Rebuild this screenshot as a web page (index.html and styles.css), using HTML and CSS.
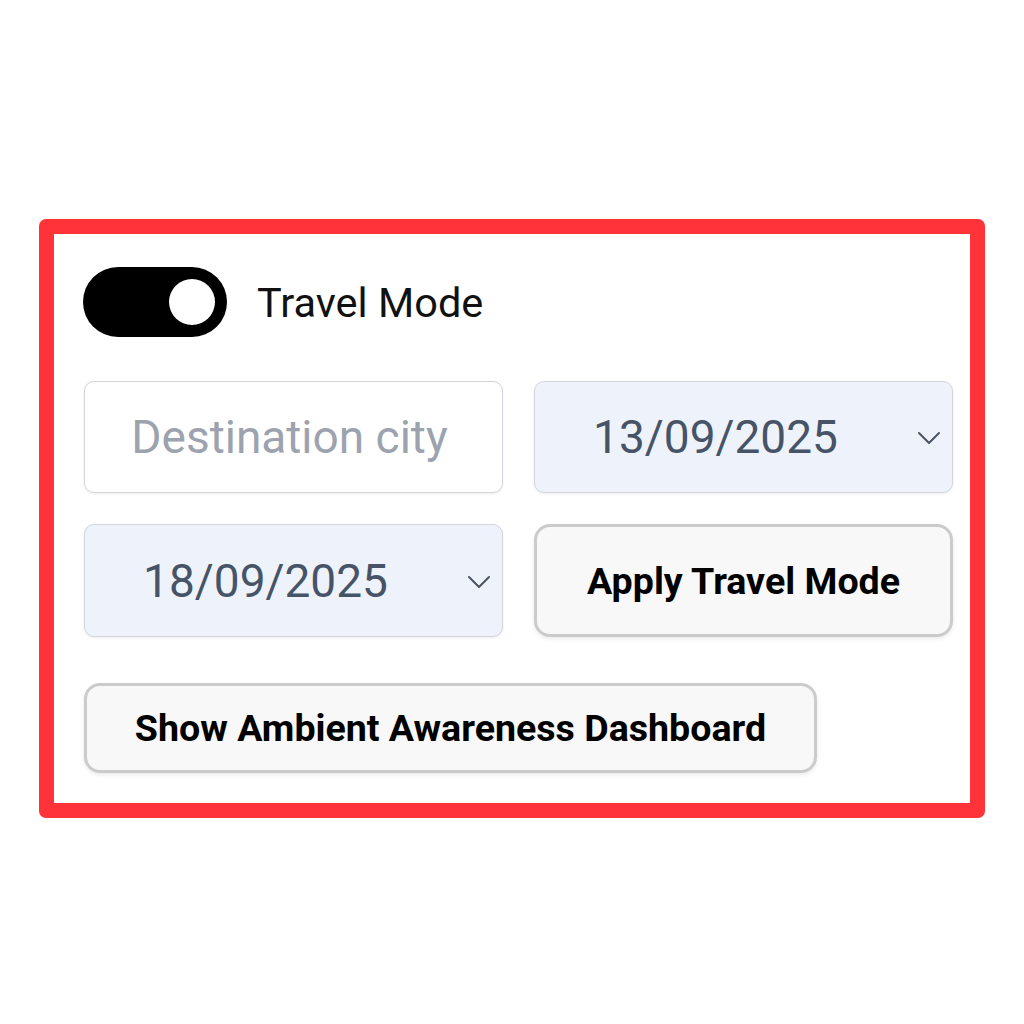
FILE: index.html
```html
<!DOCTYPE html>
<html>
<head>
<meta charset="utf-8">
<link rel="stylesheet" href="styles.css">
</head>
<body>
<div class="frame">
  <div class="toggle-row">
    <div class="toggle"><span class="knob"></span></div>
    <span class="toggle-label">Travel Mode</span>
  </div>
  <div class="grid">
    <div class="field text-field"><span class="placeholder">Destination city</span></div>
    <div class="field date-field">
      <span class="date-value">13/09/2025</span>
      <svg class="chev" width="24" height="14" viewBox="0 0 24 14"><path d="M2 2 L12 12 L22 2" fill="none" stroke="#4b5563" stroke-width="2" stroke-linecap="round" stroke-linejoin="round"/></svg>
    </div>
    <div class="field date-field">
      <span class="date-value">18/09/2025</span>
      <svg class="chev" width="24" height="14" viewBox="0 0 24 14"><path d="M2 2 L12 12 L22 2" fill="none" stroke="#4b5563" stroke-width="2" stroke-linecap="round" stroke-linejoin="round"/></svg>
    </div>
    <button class="btn apply">Apply Travel Mode</button>
  </div>
  <div class="dash-row">
    <button class="btn dash">Show Ambient Awareness Dashboard</button>
  </div>
</div>
</body>
</html>
```
FILE: styles.css
```css
html, body {
  margin: 0;
  padding: 0;
  background: #ffffff;
  font-family: Roboto, "Liberation Sans", sans-serif;
}
.frame {
  box-sizing: border-box;
  margin: 219px 0 0 39px;
  width: 946px;
  height: 599px;
  border: 15px solid #ff3338;
  border-radius: 7px;
  padding: 33px 15px 30px 30px;
}
.toggle-row {
  display: flex;
  align-items: center;
  height: 70px;
  margin-left: -1px;
}
.toggle {
  box-sizing: border-box;
  width: 144px;
  height: 70px;
  border-radius: 35px;
  background: #000000;
  display: flex;
  align-items: center;
  justify-content: flex-end;
  padding-right: 12px;
}
.knob {
  width: 46px;
  height: 46px;
  border-radius: 50%;
  background: #ffffff;
}
.toggle-label {
  margin-left: 30px;
  font-size: 41.5px;
  color: #111111;
}
.grid {
  margin-top: 44px;
  display: grid;
  grid-template-columns: 419px 419px;
  grid-template-rows: 112px 113px;
  column-gap: 31px;
  row-gap: 31px;
}
.field {
  box-sizing: border-box;
  border: 1.5px solid #d3d5da;
  border-radius: 10px;
  box-shadow: 0 1px 3px rgba(0,0,0,0.07);
  display: flex;
  align-items: center;
  position: relative;
}
.text-field {
  background: #ffffff;
  justify-content: center;
  padding-right: 8px;
}
.placeholder {
  font-size: 46px;
  color: #9ca3af;
}
.date-field {
  background: #eef3fb;
  justify-content: center;
  padding-right: 56px;
}
.date-value {
  font-size: 46px;
  color: #475467;
}
.chev {
  position: absolute;
  right: 11px;
  top: 50%;
  margin-top: -6px;
}
.btn {
  box-sizing: border-box;
  font-family: Roboto, "Liberation Sans", sans-serif;
  font-weight: bold;
  font-size: 37.6px;
  color: #000000;
  background: #f8f8f8;
  border: 3px solid #cbcbcb;
  border-radius: 16px;
  box-shadow: 0 2px 4px rgba(0,0,0,0.08);
  padding: 0;
}
.apply {
  width: 419px;
  height: 113px;
}
.dash-row {
  margin-top: 46px;
  display: flex;
}
.dash {
  width: 733px;
  height: 90px;
}
```
